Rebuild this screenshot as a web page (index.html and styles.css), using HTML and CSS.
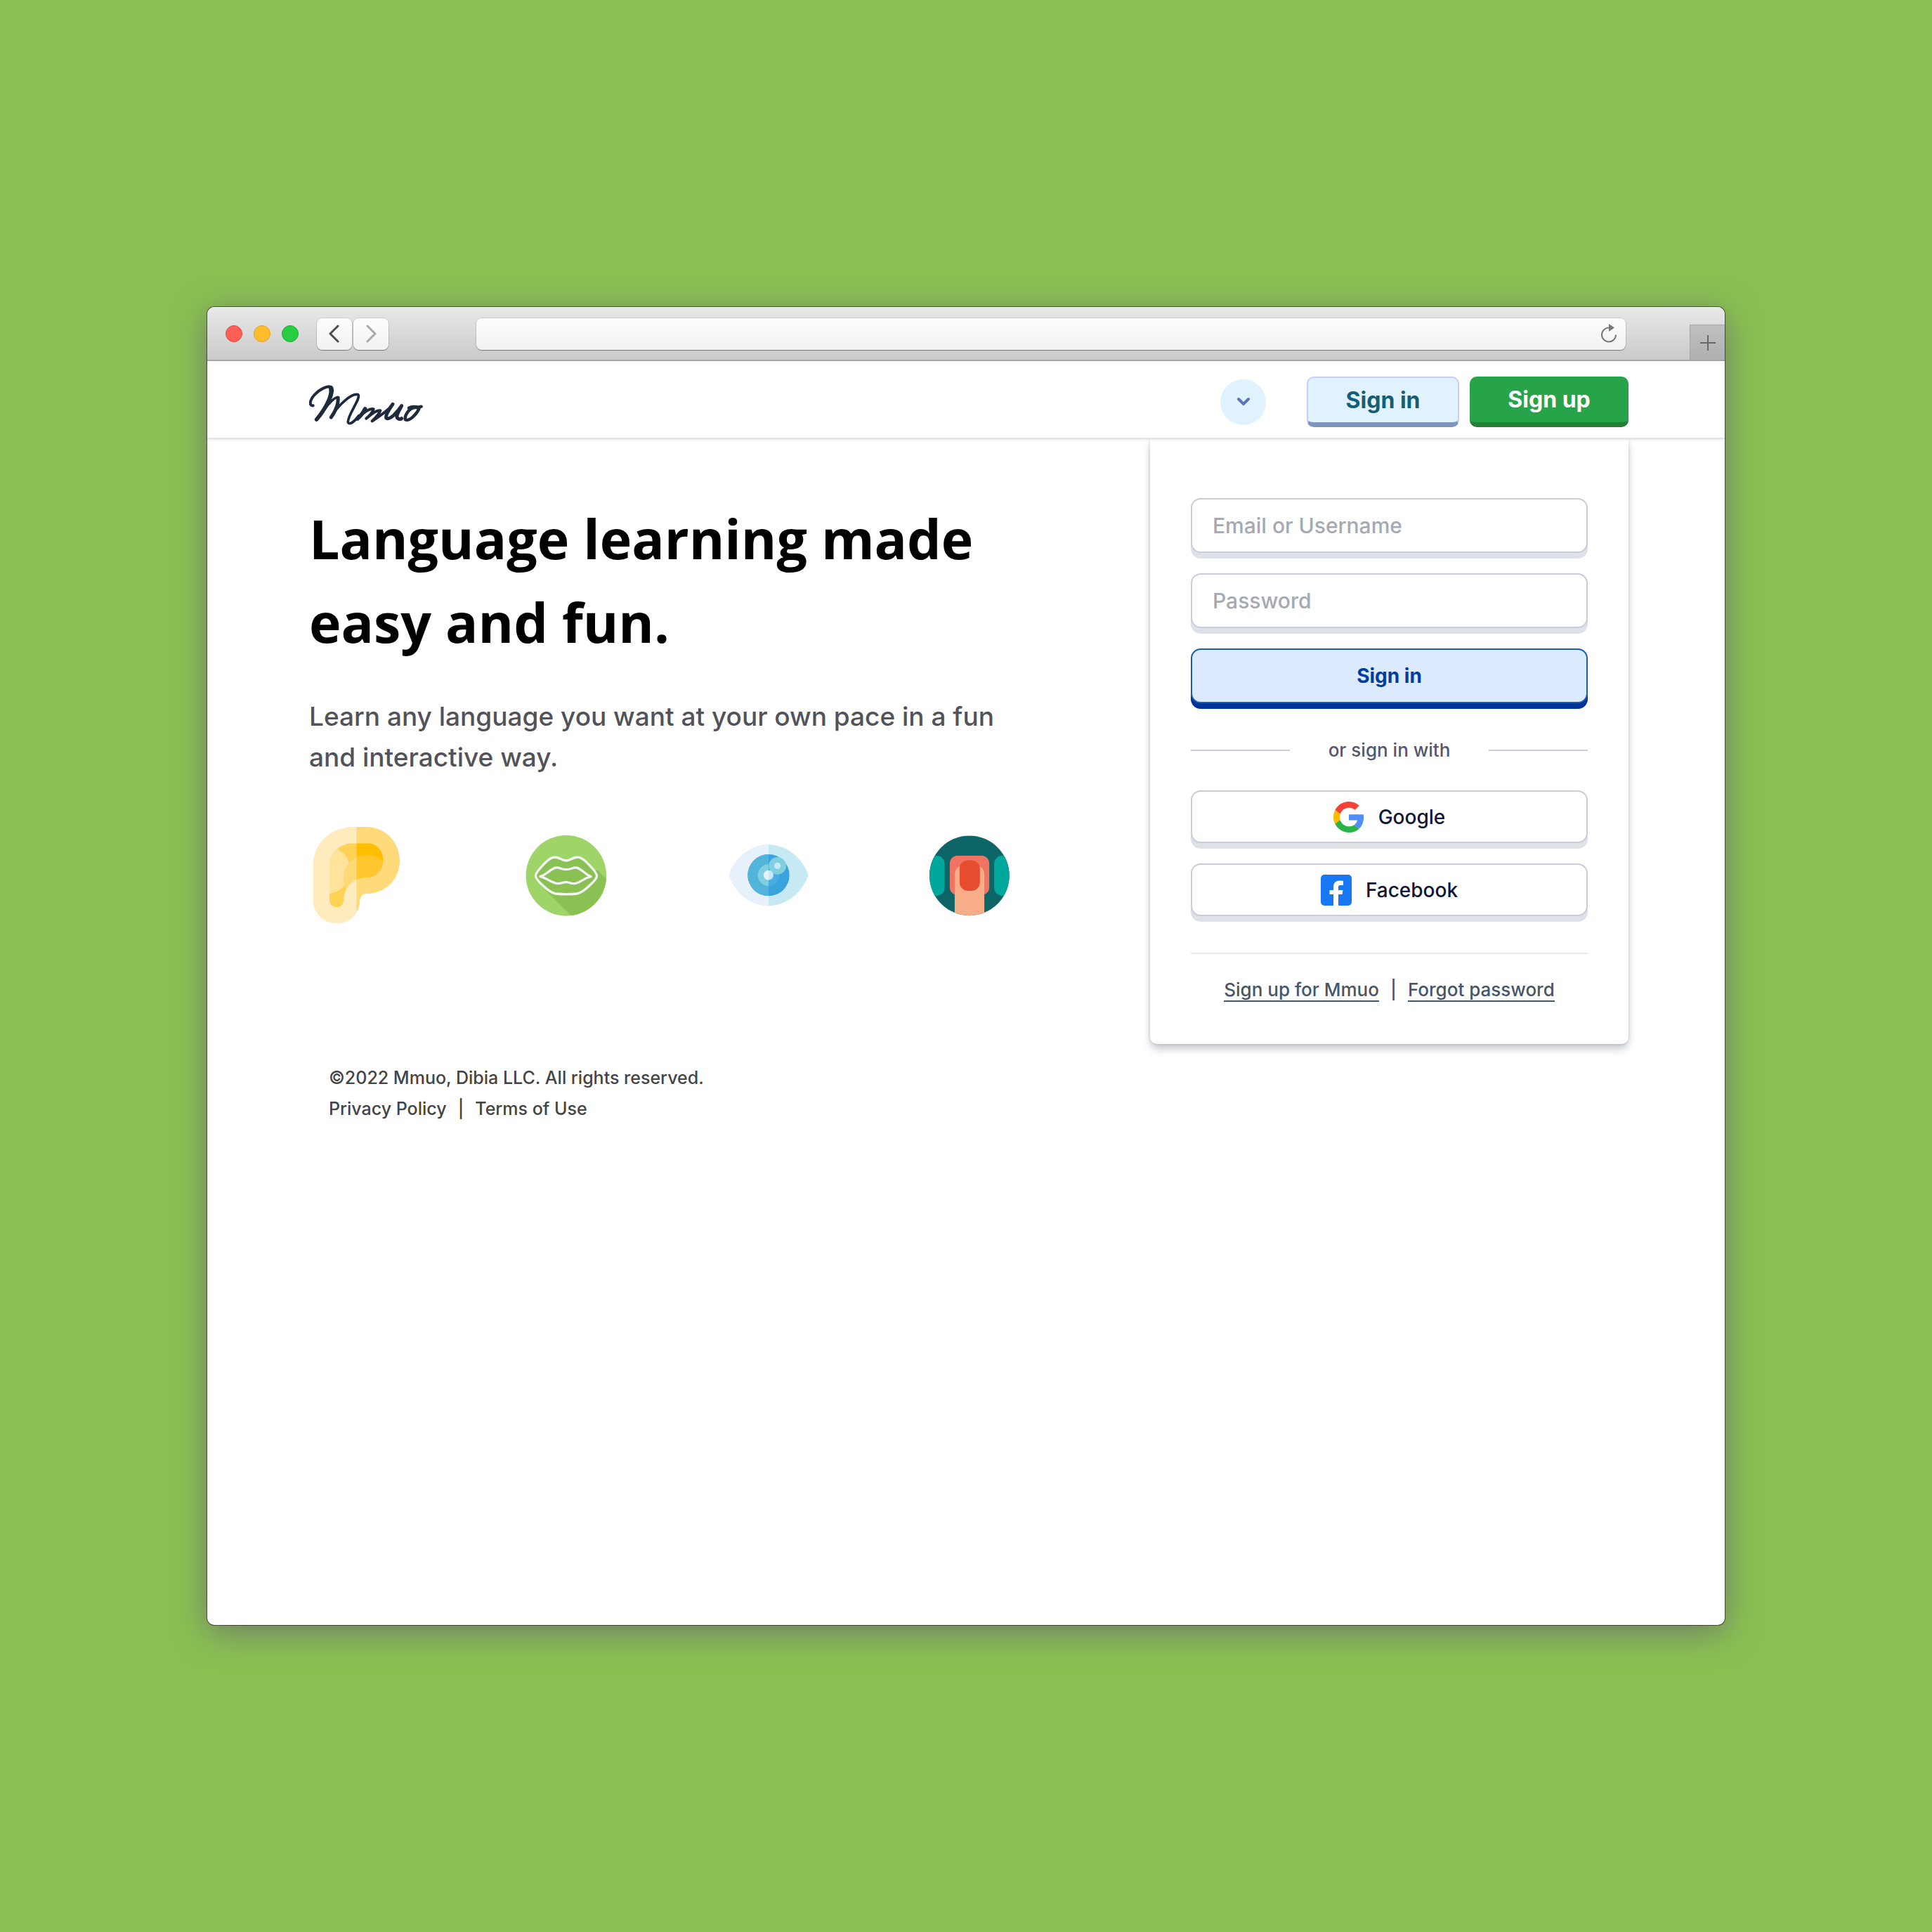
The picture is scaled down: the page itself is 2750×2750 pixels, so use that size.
FILE: index.html
```html
<!DOCTYPE html>
<html lang="en">
<head>
<meta charset="utf-8">
<meta name="viewport" content="width=device-width, initial-scale=1">
<title>Mmuo</title>
<link rel="stylesheet" href="styles.css">
</head>
<body>
<div class="window">
  <div class="toolbar">
    <div class="lights"><span class="light close"></span><span class="light minimize"></span><span class="light maximize"></span></div>
    <div class="history">
      <button class="tool" aria-label="Back"><svg width="16" height="26" viewBox="0 0 16 26"><path d="M13 2 2 13l11 11"/></svg></button>
      <button class="tool forward" aria-label="Forward"><svg width="16" height="26" viewBox="0 0 16 26"><path d="M3 2l11 11L3 24"/></svg></button>
    </div>
    <div class="address">
      <input class="address-input" type="text" aria-label="Address">
      <button class="reload" aria-label="Reload"><svg width="24" height="28" viewBox="0 0 24 28"><path d="M12 5.500a10 10 0 1 0 10 10" fill="none" stroke="#777" stroke-width="2"/><path d="M12 0v11l8-5.500z" fill="#777"/></svg></button>
    </div>
    <button class="new-tab" aria-label="New tab"><svg width="22" height="22" viewBox="0 0 22 22"><path d="M11 0v22M0 11h22" stroke="#666" stroke-width="2"/></svg></button>
  </div>

  <header class="header">
    <a class="logo" href="#" aria-label="Mmuo">
      <svg width="162" height="57" viewBox="480 383 486 171" fill="none" stroke="#1f2a3d" stroke-linecap="round" stroke-linejoin="round">
        <path stroke-width="12" d="M497 471C480 473 481 449 503 425C526 400 564 382 576 393C586 404 572 448 551 479"/>
        <path stroke-width="17" d="M572 396C583 428 544 493 512 530"/>
        <path stroke-width="11" d="M533 503C555 470 590 431 605 436"/>
        <path stroke-width="15" d="M603 438C607 463 590 500 574 521"/>
        <path stroke-width="11" d="M579 511C606 469 662 415 689 424C704 438 643 512 646 542C651 556 674 540 692 514"/>
        <path stroke-width="17" d="M719 485C711 500 698 518 686 527"/>
        <path stroke-width="12" d="M692 520C713 501 741 480 755 486C750 500 735 517 724 526C744 508 770 488 784 492C778 510 760 526 749 537C772 522 812 497 834 470"/>
        <path stroke-width="15" d="M837 465C824 484 803 512 810 525C826 533 856 500 875 472C863 494 849 514 857 524C863 530 871 530 875 526"/>
        <path stroke-width="13" d="M929 479C905 483 886 516 891 531C907 540 943 505 951 479C934 475 918 474 906 481M929 478C941 482 953 476 959 475"/>
      </svg>
    </a>
    <div class="header-actions">
      <button class="language" aria-label="Choose language"><svg width="20" height="14" viewBox="0 0 20 14"><path d="M3 3l7 7 7-7" fill="none" stroke="#5b74b4" stroke-width="4" stroke-linecap="round" stroke-linejoin="round"/></svg></button>
      <button class="nav-button sign-in">Sign in</button>
      <button class="nav-button sign-up">Sign up</button>
    </div>
  </header>

  <main class="main">
    <section class="intro">
      <h1 class="title">Language learning made easy and fun.</h1>
      <p class="lead">Learn any language you want at your own pace in a fun and interactive way.</p>
      <div class="senses">
        <svg width="136" height="138" viewBox="60 81 408 414" role="img" aria-label="Ear">
          <defs>
            <clipPath id="ear-left"><path d="M60 81H262V495H60z"/></clipPath>
            <clipPath id="ear-inner"><path d="M147 250C147 190 190 151 250 151H310C350 151 376 185 376 222C376 265 345 297 305 297C250 297 208 335 208 392C208 412 195 423 177 423C160 423 147 412 147 392Z"/></clipPath>
          </defs>
          <path fill="#ffda7a" d="M78 250C78 150 150 81 262 81H310C390 84 447 150 447 226C447 305 385 366 310 366C288 366 280 374 277 395C275 418 272 432 262 444C246 477 215 492 178 492C120 492 78 448 78 392Z"/>
          <path fill="#ffecbe" d="M78 250C78 150 150 81 262 81V444C246 477 215 492 178 492C120 492 78 448 78 392Z"/>
          <g clip-path="url(#ear-inner)">
            <path fill="#ffd155" d="M140 140H262V430H140z"/>
            <path fill="#ffbf00" d="M262 140H380V430H262z"/>
            <circle cx="135" cy="265" r="101" fill="#ffe39a"/>
            <circle cx="306" cy="298" r="98" fill="#ffc62e"/>
            <circle cx="306" cy="298" r="98" fill="#ffd977" clip-path="url(#ear-left)"/>
          </g>
        </svg>
        <svg width="116" height="115" viewBox="985 115 347 345" role="img" aria-label="Mouth">
          <clipPath id="mouth-disc"><circle cx="1158" cy="287" r="172"/></clipPath>
          <g clip-path="url(#mouth-disc)">
            <path fill="#9fd468" d="M985 115H1332V460H985z"/>
            <path fill="#8bc053" d="M1060 338 1182 460H1340V312L1290 262Z"/>
          </g>
          <g fill="#8bc053" stroke="#f3f4f6" stroke-width="10" stroke-linejoin="round">
            <path d="M1028 288C1028 270 1082 215 1100 210C1128 203 1135 223 1158 223C1181 223 1189 203 1216 210C1234 215 1289 270 1289 288C1289 304 1232 360 1205 364Q1158 369 1112 364C1085 360 1028 304 1028 288Z"/>
            <path d="M1047 291C1075 283 1095 255 1115 253C1130 251 1135 261 1158 261C1181 261 1186 251 1202 253C1222 256 1240 283 1264 291C1235 297 1215 320 1192 321C1178 322 1172 315 1158 315C1143 315 1137 322 1122 321C1100 320 1075 297 1047 291Z"/>
          </g>
        </svg>
        <svg width="114" height="88" viewBox="109 155 342 264" role="img" aria-label="Eye">
          <clipPath id="eye-left"><path d="M109 155H280V419H109z"/></clipPath>
          <path fill="#c6e9f4" d="M110 286C140 205 210 156 280 156C350 156 420 205 450 286C420 368 350 417 280 417C210 417 140 368 110 286Z"/>
          <path fill="#e6f1fb" d="M110 286C140 205 210 156 280 156V417C210 417 140 368 110 286Z"/>
          <circle cx="280" cy="286" r="89" fill="#3aa3de"/>
          <circle cx="280" cy="286" r="46" fill="#47ade3"/>
          <g clip-path="url(#eye-left)"><circle cx="280" cy="286" r="89" fill="#52b3db"/><circle cx="280" cy="286" r="46" fill="#80cfe0"/></g>
          <circle cx="318" cy="246" r="37" fill="#80cfe0"/>
          <circle cx="318" cy="246" r="14" fill="#c6e9f4"/>
          <circle cx="280" cy="286" r="21" fill="#c6e9f4"/>
          <circle cx="280" cy="286" r="21" fill="#e6f1fb" clip-path="url(#eye-left)"/>
        </svg>
        <svg width="114" height="115" viewBox="967 115 343 345" role="img" aria-label="Touch">
          <clipPath id="touch-disc"><circle cx="1138" cy="287" r="171"/></clipPath>
          <g clip-path="url(#touch-disc)">
            <path fill="#0e6567" d="M967 115H1310V460H967z"/>
            <rect x="930" y="202" width="102" height="171" rx="34" fill="#00a79d"/>
            <rect x="1244" y="202" width="102" height="171" rx="34" fill="#00a79d"/>
            <rect x="1054" y="202" width="169" height="168" rx="32" fill="#f27361"/>
            <path fill="#f7ad87" d="M1075 470V280Q1078 255 1096 248H1183Q1199 255 1202 280V470Z"/>
            <rect x="1096" y="221" width="87" height="131" rx="36" fill="#e64d2e"/>
          </g>
        </svg>
      </div>
    </section>

    <form class="card">
      <div class="fields">
        <input class="control field" type="text" placeholder="Email or Username" aria-label="Email or Username">
        <input class="control field" type="password" placeholder="Password" aria-label="Password">
        <button class="control submit" type="button">Sign in</button>
      </div>
      <div class="divider"><span class="divider-text">or sign in with</span></div>
      <div class="providers">
        <button class="control provider" type="button">
          <svg width="44" height="44" viewBox="0 0 48 48"><path fill="#f44336" d="M24 9.500c3.540 0 6.710 1.220 9.210 3.600l6.850-6.850C35.900 2.380 30.470 0 24 0 14.620 0 6.510 5.380 2.560 13.220l7.980 6.190C12.430 13.720 17.740 9.500 24 9.500z"/><path fill="#518ef8" d="M46.980 24.550c0-1.570-.15-3.090-.38-4.550H24v9.020h12.940c-.58 2.960-2.260 5.480-4.780 7.180l7.730 6c4.510-4.180 7.090-10.360 7.090-17.650z"/><path fill="#fbbb00" d="M10.530 28.590c-.48-1.450-.76-2.990-.76-4.590s.27-3.140.76-4.590l-7.980-6.190C.92 16.460 0 20.120 0 24c0 3.880.92 7.540 2.560 10.780z"/><path fill="#28b446" d="M24 48c6.480 0 11.930-2.130 15.890-5.810l-7.730-6c-2.150 1.450-4.920 2.300-8.160 2.300-6.260 0-11.570-4.220-13.470-9.910l-7.980 6.190C6.510 42.620 14.620 48 24 48z"/></svg>
          Google
        </button>
        <button class="control provider" type="button">
          <svg width="44" height="44" viewBox="0 0 44 44"><rect width="44" height="44" rx="5" fill="#1877f2"/><path fill="#fff" d="M18 44V28h-5.500v-6H18v-4.500C18 11.500 21.500 8.500 27 8.500c1.800 0 3.500.1 5 .4V15h-3.500c-3 0-3.500 1.200-3.500 3.200V22h6.500l-1 6H25v16z"/></svg>
          Facebook
        </button>
      </div>
      <div class="card-links">
        <a class="card-link" href="#">Sign up for Mmuo</a><span>|</span><a class="card-link" href="#">Forgot password</a>
      </div>
    </form>
  </main>

  <footer class="footer">
    <div>©2022 Mmuo, Dibia LLC. All rights reserved.</div>
    <div class="legal"><a class="legal-link" href="#">Privacy Policy</a><span>|</span><a class="legal-link" href="#">Terms of Use</a></div>
  </footer>
</div>
</body>
</html>
```

FILE: styles.css
```css
* { box-sizing: border-box; }
body {
  margin: 0;
  min-height: 100vh;
  display: flex;
  padding: 437px 295px;
  background: #8ac152;
  font-family: Inter, "Open Sans", sans-serif;
  font-weight: 500;
}
button, input { font: inherit; margin: 0; padding: 0; border: 0; }
button { cursor: pointer; background: none; }
svg { display: block; flex: none; }

.window {
  flex: 1;
  min-width: 0;
  background: #fff;
  border-radius: 10px;
  overflow: hidden;
  box-shadow: 0 0 0 1px rgba(0, 0, 0, .5), 0 10px 50px rgba(104, 104, 112, .8);
}

/* Browser toolbar */
.toolbar {
  display: flex;
  align-items: center;
  height: 77px;
  padding-left: 26px;
  background: linear-gradient(#e8e8e8, #cacaca);
  border-top: 1px solid #f6f6f6;
  border-bottom: 2px solid #a6a6a6;
}
.lights { display: flex; gap: 16px; }
.light { width: 24px; height: 24px; border-radius: 50%; border: 1px solid; }
.close { background: #ff5f57; border-color: #e2463f; }
.minimize { background: #ffbd2e; border-color: #e0a028; }
.maximize { background: #28cd41; border-color: #1fab2d; }
.history { display: flex; gap: 2px; margin-left: 26px; }
.tool, .address {
  height: 45px;
  border-radius: 8px;
  background: linear-gradient(#fdfdfd, #f1f1f1);
  box-shadow: 0 0 0 1px rgba(0, 0, 0, .1), 0 1px 1px rgba(0, 0, 0, .35);
}
.tool { display: flex; align-items: center; justify-content: center; width: 50px; }
.tool path { fill: none; stroke: #4d4d4d; stroke-width: 3; stroke-linecap: round; stroke-linejoin: round; }
.forward path { stroke: #a9a9a9; }
.address { display: flex; align-items: center; flex: 1; margin-left: 125px; padding-right: 12px; }
.address-input { flex: 1; min-width: 0; height: 100%; background: none; }
.new-tab {
  display: flex;
  align-items: center;
  justify-content: center;
  align-self: flex-end;
  width: 50px;
  height: 50px;
  margin-left: 91px;
  background: linear-gradient(#c0c0c0, #b0b0b0);
  border-top: 1px solid #a6a6a6;
  border-left: 1px solid #a6a6a6;
}

/* Site header */
.header {
  position: relative;
  display: flex;
  align-items: center;
  justify-content: space-between;
  height: 111px;
  padding: 7px 137px 0 145px;
  background: #fff;
  border-bottom: 2px solid #e2e2e4;
  box-shadow: 0 1px 3px rgba(0, 0, 0, .1);
}
.logo { padding-top: 9px; }
.header-actions { display: flex; align-items: center; }
.language {
  display: flex;
  align-items: center;
  justify-content: center;
  width: 65px;
  height: 65px;
  margin-right: 58px;
  border-radius: 50%;
  background: #e0f2fe;
}
.nav-button { height: 72px; border-radius: 10px; font-size: 32px; font-weight: 700; }
.sign-in {
  width: 217px;
  margin-right: 15px;
  color: #155e75;
  background: #e0f2fe;
  border: 2px solid #c7ccfb;
  border-bottom: 7px solid #7c96bf;
}
.sign-up { width: 226px; color: #fff; background: #27a34a; border-bottom: 7px solid #218033; }

/* Page content */
.main {
  display: grid;
  grid-template-columns: minmax(0, 1fr) 681px;
  gap: 200px;
  padding: 0 137px 0 145px;
}
.title { margin: 82px 0 0; font-family: "Open Sans", sans-serif; font-size: 77px; line-height: 119px; font-weight: 700; color: #000; }
.lead { margin: 46px 0 0; font-size: 37px; line-height: 58px; color: #52525b; }
.senses { display: flex; align-items: center; justify-content: space-between; margin-top: 70px; }

.card {
  padding: 84px 58px 60px;
  border-radius: 0 0 10px 10px;
  background: #fff;
  box-shadow: 0 8px 12px -1px rgba(31, 41, 75, .26), 0 0 5px rgba(0, 0, 0, .14);
}
.fields, .providers { display: grid; gap: 29px; }
.control {
  width: 100%;
  height: 78px;
  border: 2px solid #cbcbdc;
  border-radius: 14px;
  background: #fff;
  box-shadow: 0 8px 0 #dee1e8;
  font-size: 28px;
}
.field { padding: 0 29px; font-size: 30px; color: #111827; }
.field::placeholder { color: #a3a9b5; opacity: 1; }
.submit { color: #003d9e; border-color: #1e5cb3; background: #dbeafe; box-shadow: 0 8px 0 #003399; font-weight: 700; }
.divider { display: flex; align-items: center; justify-content: space-between; margin-top: 47px; font-size: 26px; line-height: 40px; color: #56566f; }
.divider::before, .divider::after { content: ""; width: 25%; height: 2px; background: #cbcbdc; }
.providers { margin-top: 37px; }
.provider { display: flex; align-items: center; justify-content: center; gap: 20px; height: 75px; color: #101635; }
.card-links {
  display: flex;
  justify-content: center;
  gap: 16px;
  margin-top: 52px;
  padding-top: 36px;
  border-top: 2px solid #e8e8ee;
  font-size: 26px;
  line-height: 30px;
  color: #475569;
}
.card-link { color: inherit; text-decoration: none; border-bottom: 2px solid #475569; }

.footer { padding: 26px 173px; font-size: 25px; line-height: 44px; color: #444; }
.legal { display: flex; gap: 16px; }
.legal-link { color: inherit; text-decoration: none; }
```
